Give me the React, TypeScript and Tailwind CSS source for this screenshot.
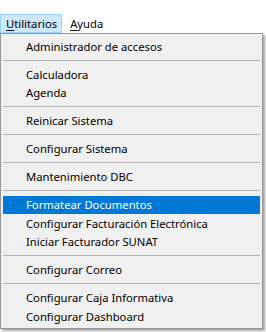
import React from 'react';

type Entry = { label: string; active?: boolean } | 'sep';

const entries: Entry[] = [
  { label: 'Administrador de accesos' },
  'sep',
  { label: 'Calculadora' },
  { label: 'Agenda' },
  'sep',
  { label: 'Reinicar Sistema' },
  'sep',
  { label: 'Configurar Sistema' },
  'sep',
  { label: 'Mantenimiento DBC' },
  'sep',
  { label: 'Formatear Documentos', active: true },
  { label: 'Configurar Facturación Electrónica' },
  { label: 'Iniciar Facturador SUNAT' },
  'sep',
  { label: 'Configurar Correo' },
  'sep',
  { label: 'Configurar Caja Informativa' },
  { label: 'Configurar Dashboard' },
];

export default function App() {
  return (
    <div className="h-[332px] w-[266px] bg-white font-['Noto_Sans',sans-serif] text-[11.25px] leading-none text-black">
      {/* menu bar */}
      <div className="flex h-[33px] items-end">
        <div className="flex h-[19px] items-center border border-[#99d1ff] bg-[#cce8ff] pr-[4px] pl-[5px]">
          <span className="underline underline-offset-2">U</span>tilitarios
        </div>
        <div className="flex h-[19px] items-center px-[8px]">
          <span className="underline underline-offset-2">A</span>yuda
        </div>
      </div>

      {/* dropdown */}
      <div className="w-[263px] border border-[#979797] bg-[#f0f0f0] px-[2px] pt-[3px] pb-[2px] shadow-[2px_2px_2px_rgba(0,0,0,0.35)]">
        {entries.map((e, i) =>
          e === 'sep' ? (
            <div key={i} className="flex h-[9.5px] items-center">
              <div className="h-px w-full bg-[#b4b4b4]" />
            </div>
          ) : (
            <div
              key={i}
              className={
                e.active
                  ? 'flex h-[18.5px] items-center bg-[#0078d7] pl-[23px] text-white'
                  : 'flex h-[18.5px] items-center pl-[23px]'
              }
            >
              {e.label}
            </div>
          )
        )}
      </div>
    </div>
  );
}
